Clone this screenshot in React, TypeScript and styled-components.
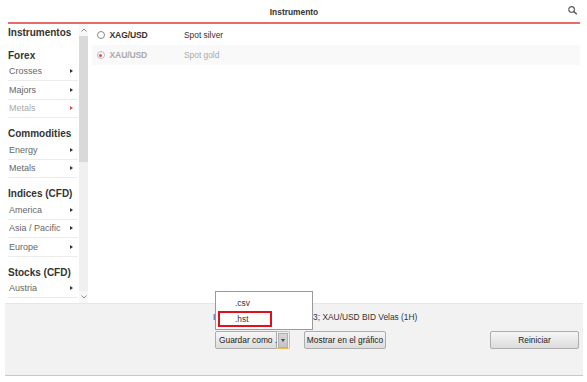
import React from "react";
import styled, { createGlobalStyle } from "styled-components";

const Global = createGlobalStyle`
  html, body { margin: 0; padding: 0; background: #fff; }
  body { font-family: "Liberation Sans", Arial, sans-serif; }
  * { box-sizing: border-box; }
`;

const Page = styled.div`
  width: 587px;
  height: 382px;
  display: flex;
  flex-direction: column;
  overflow: hidden;
  background: #fff;
`;

const Header = styled.header`
  margin: 0 7px 0 8px;
  height: 24px;
  border-bottom: 2px solid #e66b6b;
  display: grid;
  grid-template-columns: 1fr auto 1fr;
  align-items: center;
`;

const Title = styled.div`
  grid-column: 2;
  font-size: 8.4px;
  font-weight: bold;
  color: #333;
  padding-top: 1px;
`;

const SearchIcon = styled.svg`
  grid-column: 3;
  justify-self: end;
  margin-right: 2.5px;
  margin-top: -1px;
`;

const Content = styled.div`
  display: flex;
  height: 279px;
  margin: 0 7px 0 8px;
`;

const Sidebar = styled.nav`
  width: 71px;
  overflow: hidden;
  padding-top: 1.5px;
`;

const Heading = styled.div<{ $first?: boolean }>`
  height: 14px;
  line-height: 14px;
  margin-top: ${(p) => (p.$first ? 0 : 9)}px;
  font-size: 10px;
  font-weight: bold;
  color: #333;
  white-space: nowrap;
`;

const Item = styled.div<{ $active?: boolean }>`
  width: 70px;
  height: 18.5px;
  padding: 0 5px 0 1px;
  border-bottom: 1px solid #ececec;
  display: flex;
  align-items: center;
  justify-content: space-between;
  font-size: 9px;
  color: ${(p) => (p.$active ? "#aaa" : "#666")};
  white-space: nowrap;
`;

const Caret = styled.span<{ $active?: boolean }>`
  width: 0;
  height: 0;
  border-left: 3px solid ${(p) => (p.$active ? "#e04848" : "#333")};
  border-top: 2.5px solid transparent;
  border-bottom: 2.5px solid transparent;
`;

const Scrollbar = styled.div`
  width: 9px;
  display: flex;
  flex-direction: column;
  background: #f0f0f0;
`;

const ScrollButton = styled.div`
  height: 12px;
  display: flex;
  align-items: center;
  justify-content: center;
  background: #f7f7f7;
`;

const Thumb = styled.div`
  height: 126px;
  background: #d9d9d9;
`;

const Track = styled.div`
  flex: 1;
`;

const List = styled.div`
  flex: 1;
  margin-left: 4px;
  padding-top: 1px;
`;

const Row = styled.div<{ $selected?: boolean }>`
  height: 20px;
  display: flex;
  align-items: center;
  padding-left: 4.5px;
  background: ${(p) => (p.$selected ? "#f9f9f9" : "#fff")};
  color: ${(p) => (p.$selected ? "#aaa" : "#333")};
  font-size: 8.4px;
`;

const Radio = styled.span<{ $checked?: boolean }>`
  width: 8px;
  height: 8px;
  border-radius: 50%;
  border: 1px solid ${(p) => (p.$checked ? "#bbb" : "#888")};
  background: #fff;
  display: flex;
  align-items: center;
  justify-content: center;
  margin-right: 5px;
  &::after {
    content: "";
    width: 3px;
    height: 3px;
    border-radius: 50%;
    background: ${(p) => (p.$checked ? "#e04848" : "transparent")};
  }
`;

const Symbol = styled.span`
  width: 74.5px;
  font-weight: bold;
  font-size: 8.6px;
  letter-spacing: -0.15px;
`;

const Description = styled.span``;

const BottomPanel = styled.footer`
  margin: 0 4px 0 5px;
  height: 73px;
  background: #f2f2f2;
  border-top: 1px solid #e6e6e6;
  border-bottom: 1px solid #c8c8c8;
  padding: 7px 4px 0 208px;
`;

const InfoText = styled.div`
  height: 13px;
  line-height: 13px;
  font-size: 8.4px;
  color: #333;
  white-space: nowrap;
`;

const ButtonRow = styled.div`
  margin-top: 7px;
  padding-left: 2px;
  display: flex;
  align-items: center;
`;

const SplitButton = styled.div`
  position: relative;
  display: flex;
  height: 18px;
`;

const Button = styled.button<{ $w: number }>`
  width: ${(p) => p.$w}px;
  height: 18px;
  padding: 0;
  border: 1px solid #adadad;
  border-radius: 2px;
  background: linear-gradient(#f6f6f6, #dcdcdc);
  font-family: "Liberation Sans", Arial, sans-serif;
  font-size: 8.4px;
  color: #222;
  text-align: center;
  white-space: nowrap;
  cursor: default;
`;

const MainPart = styled(Button)`
  border-radius: 2px 0 0 2px;
  padding-left: 3px;
  text-align: left;
`;

const ArrowPart = styled.button`
  width: 13px;
  height: 18px;
  padding: 0;
  border: 1px solid #efb95a;
  border-left: none;
  border-radius: 0 2px 2px 0;
  background: #f2f2f2;
  display: flex;
  align-items: center;
  justify-content: center;
`;

const ArrowInner = styled.span`
  width: 10px;
  height: 15px;
  background: linear-gradient(#d6d6d6, #c4c4c4);
  border: 1px solid #b0b0b0;
  display: flex;
  align-items: center;
  justify-content: center;
  &::after {
    content: "";
    border-top: 3px solid #3a4a66;
    border-left: 2.5px solid transparent;
    border-right: 2.5px solid transparent;
  }
`;

const Spacer = styled.div`
  flex: 1;
`;

const Gap = styled.div<{ $w: number }>`
  width: ${(p) => p.$w}px;
`;

const Menu = styled.div`
  position: absolute;
  left: 0;
  bottom: 19px;
  width: 98px;
  height: 39px;
  background: #fff;
  border: 1px solid #9a9a9a;
  padding: 3px 0 0 0;
  font-size: 8.4px;
  color: #333;
`;

const MenuItem = styled.div<{ $marked?: boolean }>`
  height: 16px;
  line-height: ${(p) => (p.$marked ? 12 : 16)}px;
  margin-left: 2px;
  width: 54px;
  padding-left: ${(p) => (p.$marked ? 15 : 17)}px;
  border: ${(p) => (p.$marked ? "2px solid #e3101c" : "none")};
`;

const items = {
  forex: ["Crosses", "Majors", "Metals"],
  commodities: ["Energy", "Metals"],
  indices: ["America", "Asia / Pacific", "Europe"],
  stocks: ["Austria", "Belgium"],
};

function Chevron({ up }: { up?: boolean }) {
  return (
    <svg width="6" height="4" viewBox="0 0 6 4">
      <polyline
        points={up ? "0.5,3.5 3,1 5.5,3.5" : "0.5,0.5 3,3 5.5,0.5"}
        fill="none"
        stroke="#8a8a8a"
        strokeWidth="1"
      />
    </svg>
  );
}

export default function App() {
  return (
    <Page>
      <Global />
      <Header>
        <Title>Instrumento</Title>
        <SearchIcon width="10" height="9" viewBox="0 0 10 9">
          <circle cx="3.6" cy="3.4" r="2.8" fill="none" stroke="#555" strokeWidth="1.1" />
          <line x1="5.7" y1="5.5" x2="8.8" y2="8.3" stroke="#555" strokeWidth="1.4" />
        </SearchIcon>
      </Header>
      <Content>
        <Sidebar>
          <Heading $first>Instrumentos</Heading>
          <Heading>Forex</Heading>
          {items.forex.map((t, i) => (
            <Item key={t} $active={i === 2}>
              {t}
              <Caret $active={i === 2} />
            </Item>
          ))}
          <Heading>Commodities</Heading>
          {items.commodities.map((t) => (
            <Item key={t}>
              {t}
              <Caret />
            </Item>
          ))}
          <Heading>Indices (CFD)</Heading>
          {items.indices.map((t) => (
            <Item key={t}>
              {t}
              <Caret />
            </Item>
          ))}
          <Heading>Stocks (CFD)</Heading>
          {items.stocks.map((t) => (
            <Item key={t}>
              {t}
              <Caret />
            </Item>
          ))}
        </Sidebar>
        <Scrollbar>
          <ScrollButton>
            <Chevron up />
          </ScrollButton>
          <Thumb />
          <Track />
          <ScrollButton>
            <Chevron />
          </ScrollButton>
        </Scrollbar>
        <List>
          <Row>
            <Radio />
            <Symbol>XAG/USD</Symbol>
            <Description>Spot silver</Description>
          </Row>
          <Row $selected>
            <Radio $checked />
            <Symbol>XAU/USD</Symbol>
            <Description>Spot gold</Description>
          </Row>
        </List>
      </Content>
      <BottomPanel>
        <InfoText>Intervalo 02.01 - 31.01.2023; XAU/USD BID Velas (1H)</InfoText>
        <ButtonRow>
          <SplitButton>
            <MainPart $w={62}>Guardar como .</MainPart>
            <ArrowPart>
              <ArrowInner />
            </ArrowPart>
            <Menu>
              <MenuItem>.csv</MenuItem>
              <MenuItem $marked>.hst</MenuItem>
            </Menu>
          </SplitButton>
          <Gap $w={14} />
          <Button $w={82}>Mostrar en el gráfico</Button>
          <Spacer />
          <Button $w={89}>Reiniciar</Button>
        </ButtonRow>
      </BottomPanel>
    </Page>
  );
}
